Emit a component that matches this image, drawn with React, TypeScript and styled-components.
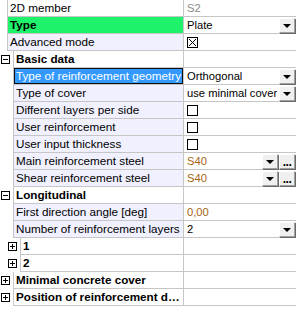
import React from 'react';
import styled, { createGlobalStyle } from 'styled-components';

const GlobalStyle = createGlobalStyle`
  html, body {
    margin: 0;
    padding: 0;
    background: #ffffff;
  }
  body {
    font-family: "Liberation Sans", Arial, sans-serif;
    font-size: 11px;
    color: #000;
  }
`;

const LINE = '#c6c6c6';
const LABEL_END = 183;

const Grid = styled.div`
  width: 296px;
  height: 309px;
  overflow: hidden;
  background: #fff;
  display: flex;
  flex-direction: column;
`;

const RowBox = styled.div`
  display: flex;
  height: 17px;
  flex: none;
`;

const Gutter = styled.div<{ $w: number }>`
  width: ${(p) => p.$w}px;
  flex: none;
  position: relative;
`;

const Cells = styled.div`
  flex: 1;
  display: flex;
  border-left: 1px solid ${LINE};
  border-bottom: 1px solid ${LINE};
  min-width: 0;
`;

const Label = styled.div<{ $bg: string; $bold?: boolean; $selected?: boolean; $w: number }>`
  width: ${(p) => p.$w}px;
  flex: none;
  background: ${(p) => (p.$selected ? '#3399ff' : p.$bg)};
  color: ${(p) => (p.$selected ? '#fff' : '#000')};
  font-size: 11.7px;
  font-weight: ${(p) => (p.$bold ? 'bold' : 'normal')};
  box-shadow: ${(p) => (p.$selected ? 'inset 0 0 0 1px #101010' : 'none')};
  padding-left: 2px;
  line-height: 16px;
  white-space: nowrap;
  overflow: hidden;
  text-overflow: ${(p) => (p.$bold ? 'ellipsis' : 'clip')};
  box-sizing: border-box;
`;

const Value = styled.div<{ $color?: string }>`
  flex: 1;
  display: flex;
  align-items: center;
  border-left: 1px solid ${LINE};
  padding-left: 3px;
  color: ${(p) => p.$color || '#000'};
  font-size: 11.2px;
  line-height: 16px;
  white-space: nowrap;
  min-width: 0;
`;

const ValueText = styled.span`
  flex: 1;
  overflow: hidden;
`;

const Expander = styled.div<{ $x: number }>`
  position: absolute;
  left: ${(p) => p.$x}px;
  top: 4px;
  width: 9px;
  height: 9px;
  box-sizing: border-box;
  border: 1px solid #000;
  background: #fff;
`;

const Bar = styled.div<{ $v?: boolean }>`
  position: absolute;
  background: #000;
  left: ${(p) => (p.$v ? 3 : 1)}px;
  top: ${(p) => (p.$v ? 1 : 3)}px;
  width: ${(p) => (p.$v ? 1 : 5)}px;
  height: ${(p) => (p.$v ? 5 : 1)}px;
`;

const Btn = styled.div`
  width: 16px;
  height: 15px;
  flex: none;
  box-sizing: border-box;
  background: #f0f0f0;
  border-top: 1px solid #ffffff;
  border-left: 1px solid #ffffff;
  border-right: 1px solid #a0a0a0;
  border-bottom: 1px solid #a0a0a0;
  box-shadow: 1px 1px 0 #696969;
  margin-right: 1px;
  display: flex;
  align-items: center;
  justify-content: center;
`;

const Arrow = styled.div`
  width: 0;
  height: 0;
  border-left: 4px solid transparent;
  border-right: 4px solid transparent;
  border-top: 4px solid #000;
  margin-top: 1px;
`;

const Dots = styled.span`
  font-size: 12px;
  line-height: 12px;
  margin-top: 1px;
  letter-spacing: -0.5px;
  font-weight: bold;
  color: #000;
`;

const Check = styled.div`
  width: 11px;
  height: 11px;
  box-sizing: border-box;
  border: 1px solid #000;
  background: #fff;
  display: flex;
`;

type Kind = 'text' | 'drop' | 'dropdots' | 'check' | 'checked' | 'none';

interface RowDef {
  indent: number;
  label: string;
  value?: string;
  kind?: Kind;
  bg?: string;
  bold?: boolean;
  selected?: boolean;
  expander?: { x: number; open: boolean };
  color?: string;
}

const LAV = '#f0f0fe';
const STEEL = '#a5650f';

const rows: RowDef[] = [
  { indent: 7, label: '2D member', value: 'S2', kind: 'text', bg: '#fff', color: '#8c8c8c' },
  { indent: 7, label: 'Type', value: 'Plate', kind: 'drop', bg: '#1ef26a', bold: true },
  { indent: 7, label: 'Advanced mode', kind: 'checked', bg: LAV },
  { indent: 13, label: 'Basic data', bold: true, bg: '#fff', kind: 'none', expander: { x: 1, open: true } },
  { indent: 13, label: 'Type of reinforcement geometry', value: 'Orthogonal', kind: 'drop', bg: LAV, selected: true },
  { indent: 13, label: 'Type of cover', value: 'use minimal cover', kind: 'drop', bg: LAV },
  { indent: 13, label: 'Different layers per side', kind: 'check', bg: LAV },
  { indent: 13, label: 'User reinforcement', kind: 'check', bg: LAV },
  { indent: 13, label: 'User input thickness', kind: 'check', bg: LAV },
  { indent: 13, label: 'Main reinforcement steel', value: 'S40', kind: 'dropdots', bg: LAV, color: STEEL },
  { indent: 13, label: 'Shear reinforcement steel', value: 'S40', kind: 'dropdots', bg: LAV, color: STEEL },
  { indent: 13, label: 'Longitudinal', bold: true, bg: '#fff', kind: 'none', expander: { x: 1, open: true } },
  { indent: 13, label: 'First direction angle [deg]', value: '0,00', kind: 'text', bg: LAV, color: STEEL },
  { indent: 13, label: 'Number of reinforcement layers', value: '2', kind: 'drop', bg: LAV },
  { indent: 20, label: '1', bold: true, bg: '#fff', kind: 'none', expander: { x: 8, open: false } },
  { indent: 20, label: '2', bold: true, bg: '#fff', kind: 'none', expander: { x: 8, open: false } },
  { indent: 13, label: 'Minimal concrete cover', bold: true, bg: '#fff', kind: 'none', expander: { x: 1, open: false } },
  { indent: 13, label: 'Position of reinforcement data', bold: true, bg: '#fff', kind: 'none', expander: { x: 1, open: false } },
];

const DropButton = () => (
  <Btn>
    <Arrow />
  </Btn>
);

const Row: React.FC<{ row: RowDef }> = ({ row }) => {
  const kind = row.kind || 'text';
  return (
    <RowBox>
      <Gutter $w={row.indent}>
        {row.expander && (
          <Expander $x={row.expander.x}>
            <Bar />
            {!row.expander.open && <Bar $v />}
          </Expander>
        )}
      </Gutter>
      <Cells>
        <Label
          $w={LABEL_END - row.indent - 1}
          $bg={row.bg || '#fff'}
          $bold={row.bold}
          $selected={row.selected}
        >
          {row.label}
        </Label>
        <Value $color={row.color}>
          {(kind === 'check' || kind === 'checked') && (
            <Check>
              {kind === 'checked' && (
                <svg width="9" height="9" viewBox="0 0 9 9" shapeRendering="crispEdges">
                  <path d="M1 1 L8 8 M8 1 L1 8" stroke="#000" strokeWidth="1" />
                </svg>
              )}
            </Check>
          )}
          {(kind === 'text' || kind === 'drop' || kind === 'dropdots') && <ValueText>{row.value}</ValueText>}
          {(kind === 'drop' || kind === 'dropdots') && <DropButton />}
          {kind === 'dropdots' && (
            <Btn>
              <Dots>...</Dots>
            </Btn>
          )}
        </Value>
      </Cells>
    </RowBox>
  );
};

export default function App() {
  return (
    <>
      <GlobalStyle />
      <Grid>
        {rows.map((r, i) => (
          <Row key={i} row={r} />
        ))}
      </Grid>
    </>
  );
}
